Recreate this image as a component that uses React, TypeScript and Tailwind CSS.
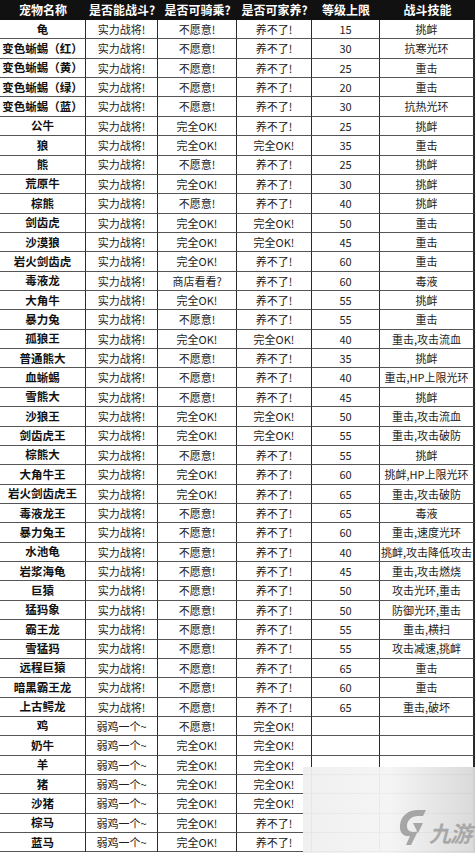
import React from 'react';

type Row = [string, string, string, string, string, string];

const header = ['宠物名称', '是否能战斗?', '是否可骑乘?', '是否可家养?', '等级上限', '战斗技能'];

const rows: Row[] = [
  ['龟', '实力战将!', '不愿意!', '养不了!', '15', '挑衅'],
  ['变色蜥蜴（红）', '实力战将!', '不愿意!', '养不了!', '30', '抗寒光环'],
  ['变色蜥蜴（黄）', '实力战将!', '不愿意!', '养不了!', '25', '重击'],
  ['变色蜥蜴（绿）', '实力战将!', '不愿意!', '养不了!', '20', '重击'],
  ['变色蜥蜴（蓝）', '实力战将!', '不愿意!', '养不了!', '30', '抗热光环'],
  ['公牛', '实力战将!', '完全OK!', '养不了!', '25', '挑衅'],
  ['狼', '实力战将!', '完全OK!', '完全OK!', '35', '重击'],
  ['熊', '实力战将!', '不愿意!', '养不了!', '25', '挑衅'],
  ['荒原牛', '实力战将!', '完全OK!', '养不了!', '30', '挑衅'],
  ['棕熊', '实力战将!', '不愿意!', '养不了!', '40', '挑衅'],
  ['剑齿虎', '实力战将!', '完全OK!', '完全OK!', '50', '重击'],
  ['沙漠狼', '实力战将!', '完全OK!', '完全OK!', '45', '重击'],
  ['岩火剑齿虎', '实力战将!', '完全OK!', '养不了!', '60', '重击'],
  ['毒液龙', '实力战将!', '商店看看?', '养不了!', '60', '毒液'],
  ['大角牛', '实力战将!', '完全OK!', '养不了!', '55', '挑衅'],
  ['暴力兔', '实力战将!', '不愿意!', '养不了!', '55', '重击'],
  ['孤狼王', '实力战将!', '完全OK!', '完全OK!', '40', '重击,攻击流血'],
  ['普通熊大', '实力战将!', '不愿意!', '养不了!', '35', '挑衅'],
  ['血蜥蜴', '实力战将!', '不愿意!', '养不了!', '40', '重击,HP上限光环'],
  ['雪熊大', '实力战将!', '不愿意!', '养不了!', '45', '挑衅'],
  ['沙狼王', '实力战将!', '完全OK!', '完全OK!', '50', '重击,攻击流血'],
  ['剑齿虎王', '实力战将!', '完全OK!', '完全OK!', '55', '重击,攻击破防'],
  ['棕熊大', '实力战将!', '不愿意!', '养不了!', '55', '挑衅'],
  ['大角牛王', '实力战将!', '完全OK!', '养不了!', '60', '挑衅,HP上限光环'],
  ['岩火剑齿虎王', '实力战将!', '完全OK!', '养不了!', '65', '重击,攻击破防'],
  ['毒液龙王', '实力战将!', '不愿意!', '养不了!', '65', '毒液'],
  ['暴力兔王', '实力战将!', '不愿意!', '养不了!', '60', '重击,速度光环'],
  ['水池龟', '实力战将!', '不愿意!', '养不了!', '40', '挑衅,攻击降低攻击'],
  ['岩浆海龟', '实力战将!', '不愿意!', '养不了!', '45', '重击,攻击燃烧'],
  ['巨猿', '实力战将!', '不愿意!', '养不了!', '50', '攻击光环,重击'],
  ['猛犸象', '实力战将!', '不愿意!', '养不了!', '50', '防御光环,重击'],
  ['霸王龙', '实力战将!', '不愿意!', '养不了!', '55', '重击,横扫'],
  ['雪猛犸', '实力战将!', '不愿意!', '养不了!', '55', '攻击减速,挑衅'],
  ['远程巨猿', '实力战将!', '不愿意!', '养不了!', '65', '重击'],
  ['暗黑霸王龙', '实力战将!', '不愿意!', '养不了!', '60', '重击'],
  ['上古鳄龙', '实力战将!', '不愿意!', '养不了!', '65', '重击,破坏'],
  ['鸡', '弱鸡一个~', '不愿意!', '完全OK!', '', ''],
  ['奶牛', '弱鸡一个~', '完全OK!', '完全OK!', '', ''],
  ['羊', '弱鸡一个~', '完全OK!', '完全OK!', '', ''],
  ['猪', '弱鸡一个~', '完全OK!', '完全OK!', '', ''],
  ['沙猪', '弱鸡一个~', '完全OK!', '完全OK!', '', ''],
  ['棕马', '弱鸡一个~', '完全OK!', '养不了!', '', ''],
  ['蓝马', '弱鸡一个~', '完全OK!', '养不了!', '', ''],
];

// watermark in the bottom-right corner
const Watermark = () => (
  <div className="absolute left-[303px] top-[767px] w-[172px] h-[86px] bg-gradient-to-r from-[#efefef]/95 via-[#f4f4f4]/95 to-[#d8d8d8]/95 flex items-end justify-end pr-[4px] pb-[6px]">
    <div className="flex items-end gap-[1px]">
      <svg width="32" height="40" viewBox="0 0 32 40" fill="none">
        <path d="M22 3 C12 3 5 9 4 18 C3 26 8 30 14 29 L10 38 L15 38 L22 24 C17 26 11 25 11 19 C11 13 16 9 22 9 L27 9 L30 3 Z" fill="#a6a6a6" />
        <path d="M17 16 L27 16 L22 26 Z" fill="#a6a6a6" />
      </svg>
      <span className="text-[22px] leading-[26px] font-bold italic text-[#a8a8a8] tracking-[-1px] pb-[2px]" style={{ fontFamily: '"Noto Sans CJK SC", sans-serif' }}>
        九游
      </span>
    </div>
  </div>
);

export default function App() {
  return (
    <div className="relative w-[475px] h-[853px] bg-white overflow-hidden" style={{ fontFamily: '"Noto Sans CJK SC", "Noto Sans", sans-serif' }}>
      <div className="grid grid-cols-[86px_72px_79px_75px_68px_95px] grid-rows-[20px_repeat(43,19.37px)]">
        {header.map(h => (
          <div key={h} className="bg-[#111] text-white font-bold text-[12px] flex items-center justify-center whitespace-nowrap">
            {h}
          </div>
        ))}
        {rows.map((row, r) => (
          <React.Fragment key={r}>
            {row.map((cell, c) => (
              <div
                key={c}
                className={
                  'flex items-center justify-center whitespace-nowrap overflow-hidden border-b border-b-[#555] border-r border-r-[#2a2a2a] ' +
                  (c === 0 ? 'font-bold text-[11.5px] text-[#111]' : 'text-[11px] text-[#222]') +
                  (c === 5 ? ' border-r-[2px]' : '')
                }
              >
                {cell}
              </div>
            ))}
          </React.Fragment>
        ))}
      </div>
      <Watermark />
    </div>
  );
}
